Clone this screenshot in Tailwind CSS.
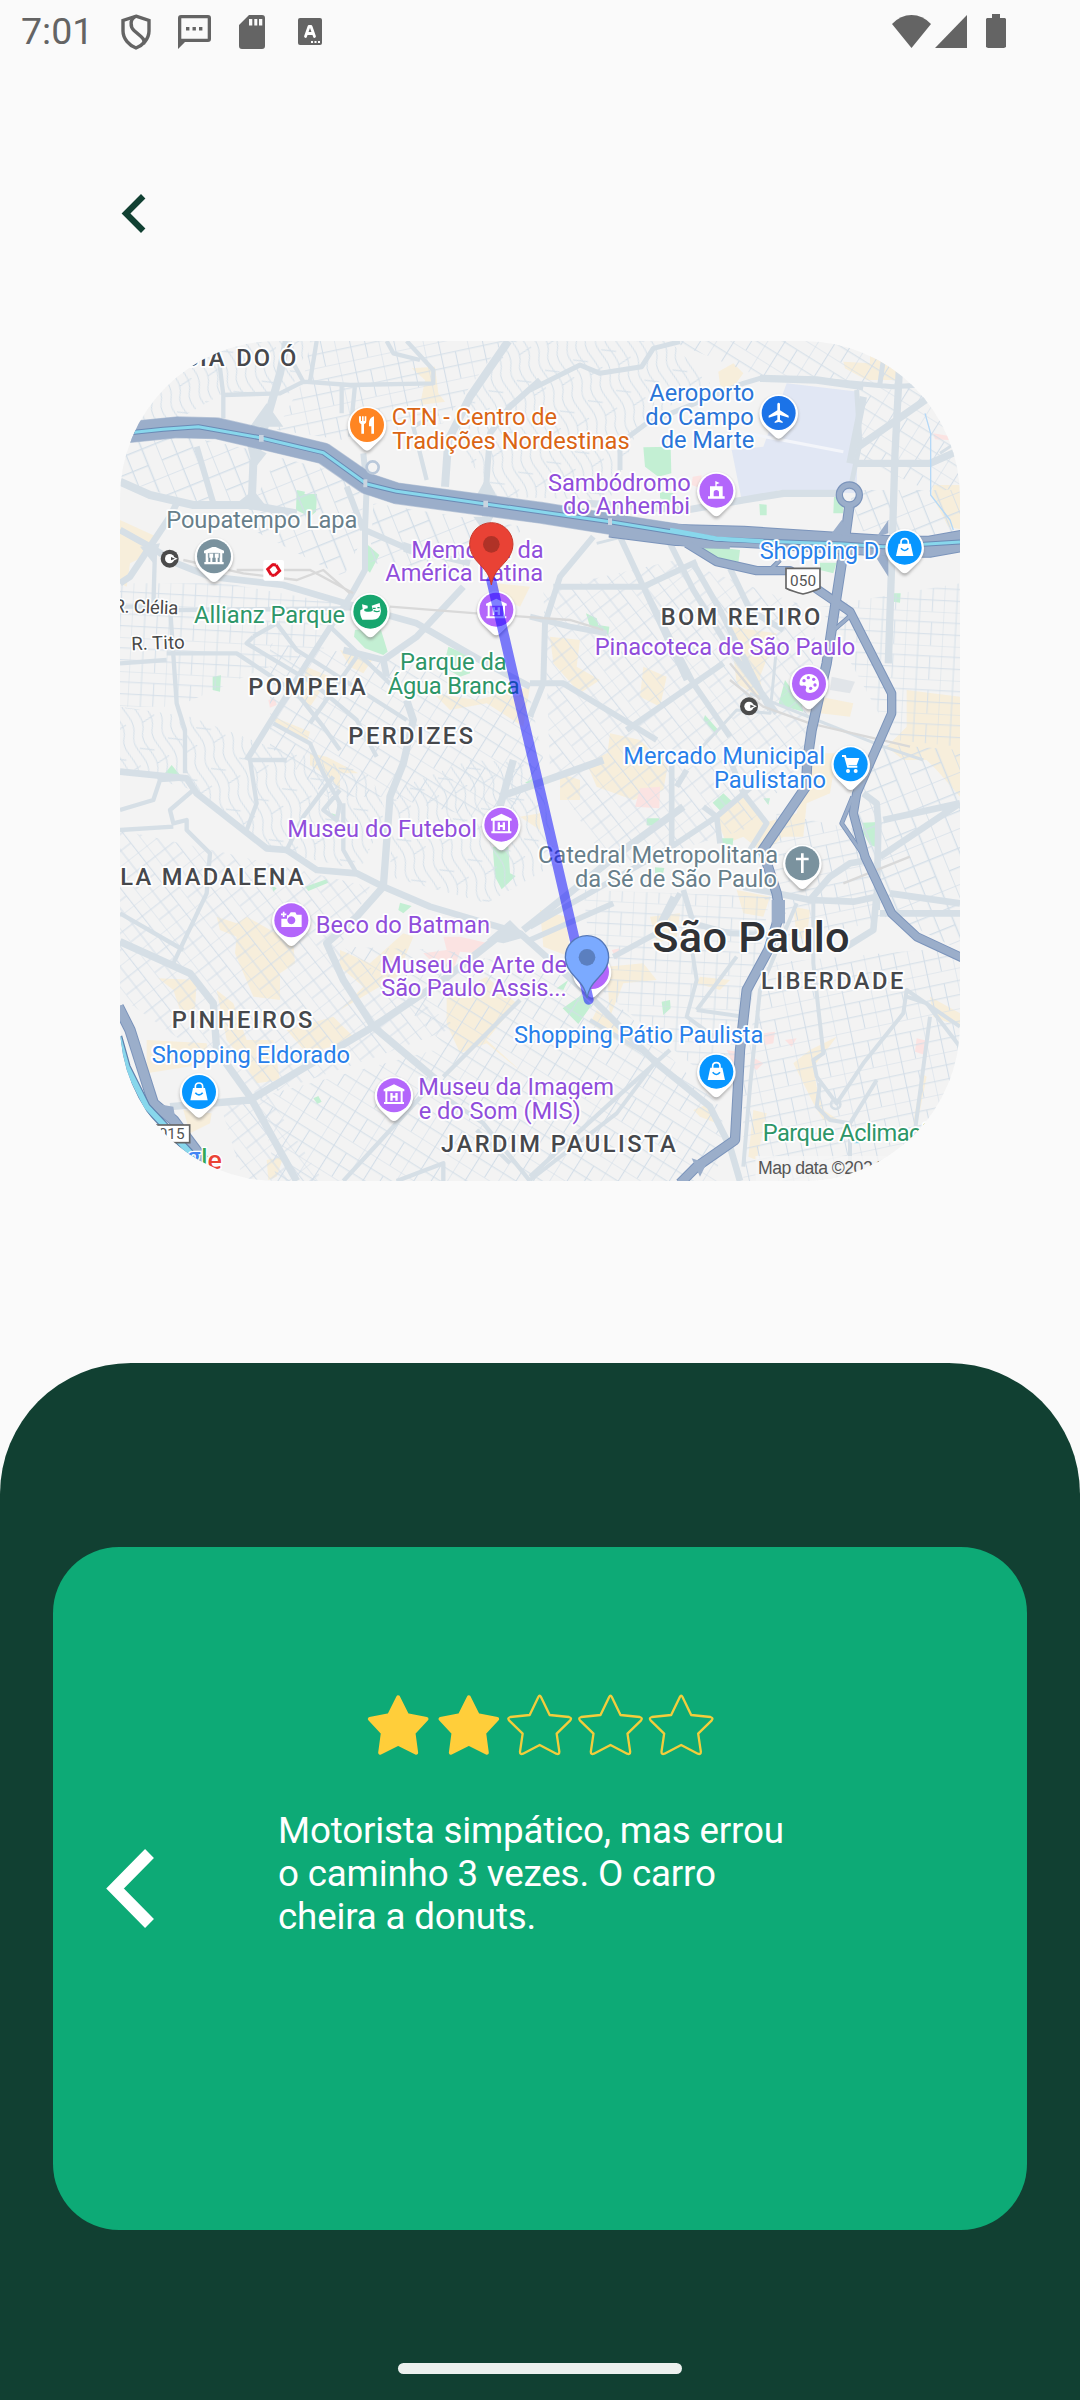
<!DOCTYPE html>
<html lang="pt-BR">
<head>
<meta charset="utf-8">
<title>Avaliação da corrida</title>
<script src="https://cdn.jsdelivr.net/npm/@tailwindcss/browser@4"></script>
</head>
<body class="bg-[#fafafa]">
<div class="flex h-[2400px] w-[1080px] flex-col overflow-hidden bg-[#fafafa] font-['Roboto',sans-serif]">

  <!-- status bar -->
  <header class="flex h-16 shrink-0 items-center pl-[21px] pr-[74px] text-[#646464]">
    <span class="w-[97px] text-[37.5px] leading-none">7:01</span>
    <svg class="ml-[3px] h-9 w-[30px] shrink-0" viewBox="0 0 30 36" fill="none" stroke="currentColor" stroke-width="3.4">
      <path d="M15 2.2 28 6.5V17C28 25 21.500 31.500 15 34 8.500 31.500 2 25 2 17V6.500Z"/>
      <path d="M14 3C9 5 9 13 13 16.500L20 22.500C23.500 25.500 23.500 28 22.500 30"/>
    </svg>
    <svg class="ml-[27px] h-[34px] w-[33px] shrink-0" viewBox="0 0 33 34" fill="currentColor">
      <path fill-rule="evenodd" d="M3 0H30Q33 0 33 3V24Q33 27 30 27H7L0 34V3Q0 0 3 0ZM3.300 3.300V23.700H29.700V3.300Z"/>
      <path d="M8 12h3.400v3.400H8zM14.500 12h3.400v3.400h-3.400zM21 12h3.400v3.400H21z"/>
    </svg>
    <svg class="ml-[28px] h-[34px] w-[26px] shrink-0" viewBox="0 0 26 34" fill="currentColor">
      <path fill-rule="evenodd" d="M10 0H23Q26 0 26 3V31Q26 34 23 34H3Q0 34 0 31V10ZM10 4V10.500H13.300V4ZM15.300 4V10.500H18.300V4ZM20 4V10.500H23.300V4Z"/>
    </svg>
    <svg class="ml-[33px] mt-[-2px] h-[27px] w-[24px] shrink-0" viewBox="0 0 24 27">
      <rect width="24" height="27" rx="2" fill="#646464"/>
      <path d="M7.500 18.500 11 8.500H13L16.500 18.500M8.800 15.500H15.200" fill="none" stroke="#fff" stroke-width="2.800" stroke-linecap="round" stroke-linejoin="round"/>
      <path d="M13 23h2v2h-2zM16.500 23h2v2h-2zM20 23h2v2h-2z" fill="#fff"/>
    </svg>
    <div class="mt-[-2px] ml-auto flex items-center">
      <svg class="h-[33px] w-[39px]" viewBox="0 0 39 33" fill="currentColor"><path d="M0 9Q8.500 0 19.500 0T39 9L19.500 33Z"/></svg>
      <svg class="ml-[4px] h-[33px] w-[32px]" viewBox="0 0 32 33" fill="currentColor"><path d="M32 0V33H0Z"/></svg>
      <svg class="ml-[19px] h-[34px] w-[20px]" viewBox="0 0 20 34" fill="currentColor"><path d="M6 0H14V4H19L20 5V33L18 34H2L0 33V5L1 4H6Z"/></svg>
    </div>
  </header>

  <!-- back button -->
  <nav class="flex h-[277px] shrink-0 pl-[121px] pt-[130px]">
    <svg class="h-[39px] w-[25px]" viewBox="0 0 25 39"><path d="M22.200 2.200 5 19.500 22.200 36.800" fill="none" stroke="#114032" stroke-width="6.200"/></svg>
  </nav>

  <!-- map -->
  <main class="h-[840px] w-[840px] shrink-0 self-center overflow-hidden rounded-[157px]">
  <svg class="h-[840px] w-[840px]" viewBox="30 33 2520 2520" font-family="Roboto, sans-serif" font-size="71">
    <defs>
      <g id="street" fill="none" stroke="#d3dee8" stroke-width="3.200"><path d="M0 0H130M0 38H130M0 80H130M0 0V120M46 0V120M90 38V120"/></g>
      <pattern id="g1" width="130" height="120" patternUnits="userSpaceOnUse" patternTransform="rotate(32)"><use href="#street"/></pattern>
      <pattern id="g2" width="130" height="120" patternUnits="userSpaceOnUse" patternTransform="rotate(-12)"><use href="#street"/></pattern>
      <pattern id="g3" width="130" height="120" patternUnits="userSpaceOnUse" patternTransform="rotate(52) scale(.9)"><use href="#street"/></pattern>
      <pattern id="g4" width="130" height="120" patternUnits="userSpaceOnUse" patternTransform="rotate(3) scale(.85)"><use href="#street"/></pattern>
      <pattern id="g5" width="130" height="120" patternUnits="userSpaceOnUse" patternTransform="rotate(68) scale(1.200)"><use href="#street"/></pattern>
      <pattern id="wavy" width="90" height="130" patternUnits="userSpaceOnUse" patternTransform="rotate(-20)"><path d="M10 0C-10 40 40 80 10 130M38 0C20 40 70 80 38 130M68 0C50 40 100 80 68 130M15 40L55 60M50 100L90 90" fill="none" stroke="#d5e0e9" stroke-width="3"/></pattern>
      <filter id="soft" x="-30%" y="-30%" width="160%" height="160%"><feGaussianBlur stdDeviation="4"/></filter>
      <g id="pin">
        <path d="M-42 44A58 58 0 1 1 42 44L11 76Q0 86-11 76Z" fill="#777" opacity=".55" filter="url(#soft)" transform="translate(0 3)"/>
        <path d="M-42 42A58 58 0 1 1 42 42L10 73Q0 81-10 73Z" fill="#fff"/>
        <circle r="51"/>
      </g>
      <g id="museum" fill="#fff"><path d="M-31-12V-18L0-33 31-18V-12ZM-26-13H-20V21H-26ZM20-13H26V21H20ZM-30 20H30V26H-30Z"/><path d="M-11 16V-7H-4V1H4V-7H11V16H4V7H-4V16Z"/></g>
      <g id="bag"><path d="M-18-12H18L26 25H-26Z" fill="#fff"/><path d="M-11-10V-16Q-11-27 0-27T11-16V-10" fill="none" stroke="#fff" stroke-width="5"/><path d="M-11 2Q0 15 11 2" fill="none" stroke="#0796ff" stroke-width="5"/></g>
      <path id="marker" d="M0 122C-5 98-10 86-34 61Q-65 31-65 0A65 65 0 1 1 65 0Q65 31 34 61C10 86 5 98 0 122Z"/>
      <g id="metro"><circle r="27" fill="#4b4b4b"/><circle r="14" fill="#fff"/><path d="M2-10 24 0 2 10Z" fill="#fff"/><path d="M4-5 16 0 4 5Z" fill="#4b4b4b"/></g>
    </defs>
    <rect x="30" y="33" width="2520" height="2520" fill="#f3f3f3"/>

    <!-- blocks: commercial, parks, hospitals -->
    <g fill="#f7eedb">
      <path d="M905 115 975 110 985 190 1005 215 930 225 945 150ZM30 570 140 620 130 665 60 700 50 770 30 760ZM690 960 790 985 760 1030 720 1010ZM590 1010 660 1040 600 1130 570 1110ZM490 1160 600 1205 590 1240 500 1190ZM970 1090 1100 1110 1260 1070 1240 1190 1130 1120 1020 1140ZM1160 760 1260 770 1230 830 1160 800Z"/>
      <g transform="translate(1260 0)"><path d="M565 125 610 100 640 130 600 185 570 165ZM940 95 1020 100 1020 70 1100 100 1110 150 1010 150 945 115ZM1210 465H1300V600L1255 590 1205 495ZM60 920 150 930 140 1010 210 1050 150 1090 70 1000ZM340 1010 410 1040 390 1130 330 1100ZM600 890 740 910 690 1040 700 1110 620 1060ZM870 1100 970 1120 960 1160 870 1150ZM1130 1080 1290 1100V1290H1120L1070 1250 1130 1190ZM240 1210 330 1230 390 1290H230Z"/></g>
      <g transform="translate(0 1260)"><path d="M600 10 650 20 745 70 690 70 690 120 650 75 600 45ZM320 500 380 520 410 500 550 580 555 640 510 670 510 750 430 740 375 610 380 560 330 540ZM145 685 260 690 255 780 210 780 190 720ZM320 720 370 760 410 870 490 870 510 990 440 1000 390 920 350 870ZM110 870 290 880 300 940 110 970ZM690 600 780 640 880 550 910 560 860 680 690 780 760 710 690 650ZM530 840 670 800 740 870 590 910ZM1010 740 1130 680 1220 760 1130 870 1240 970 1130 880 1050 910 1010 820ZM220 1080 305 1090 300 1120 240 1150ZM470 1230 520 1220 500 1280 475 1290ZM1230 200 1290 190V240Z"/></g>
      <g transform="translate(1260 1260)"><path d="M90 70 150 90 150 150 90 150ZM250 0 420 10 400 120 310 150 200 110 170 40ZM840 10H920L900 130 830 160 820 260 760 260 700 310 640 260 590 280 560 210 640 130 700 220 800 190ZM1160 0H1290V140L1220 60ZM30 480 110 500 120 620 40 590ZM230 650 340 640 380 690 280 700 240 800ZM360 500 450 490 440 560 380 580ZM510 680 600 690 570 720 500 700ZM620 420 720 440 700 500 640 490ZM790 470 840 480 830 570 800 560ZM840 900 920 860 890 900 850 950 860 1010 880 1080 940 1120 880 1110 850 1060 790 940ZM670 1080 710 1090 680 1230 655 1220ZM1200 740 1290 790V830L1210 800ZM1175 970 1190 980 1160 1130 1150 1120ZM200 780 330 870 310 900 180 820ZM490 1080 540 1060 560 1120 510 1100Z"/></g>
    </g>
    <g fill="#c3efd3">
      <path d="M560 480 585 485 583 492 621 492 618 545 600 560 558 540ZM768 640 808 675 780 728 766 715ZM735 900 810 890 833 965 820 975 765 955 732 920ZM1015 950 1085 980 1080 1030 1050 1040 1000 1010ZM308 1040 333 1036 330 1085 308 1080Z"/>
      <g transform="translate(1260 0)"><path d="M340 352 422 350 424 430 385 440 345 410ZM390 485 430 490 428 520 390 505ZM688 522 710 524 710 556 690 556ZM912 500 940 500 940 550 910 550ZM505 645 630 660 625 700 550 690ZM870 698 920 698 910 730 870 720ZM1090 790 1112 790 1110 818 1090 815ZM168 850 200 865 205 885 238 890 235 915 180 890ZM765 1050 815 1120 820 1145 745 1125ZM525 1155 565 1200 560 1215 520 1170Z"/></g>
      <g transform="translate(0 1260)"><path d="M158 78 185 45 210 75ZM1148 290 1195 290 1200 370 1217 378 1175 418 1155 380ZM585 410 650 388 655 398 595 423ZM870 458 905 468 880 490 865 480ZM665 190 680 195 665 210ZM610 1045 625 1038 635 1055 622 1062ZM1245 98 1270 85V105ZM485 405 500 415 490 425Z"/></g>
      <g transform="translate(1260 1260)"><path d="M548 158 580 130 607 155 575 187ZM350 205 388 205 388 228 350 226ZM575 265 610 265 608 285 575 280ZM700 145 720 145 715 165ZM998 218 1043 216 1035 290 1020 285 1000 250ZM98 775 155 735 185 765 145 822ZM395 755 420 750 422 775 400 795ZM375 352 403 354 398 375 375 370ZM80 715 115 690 100 720Z"/></g>
    </g>
    <g fill="#fbe3e2">
      <path d="M475 1110 495 1105 500 1125 480 1133ZM1748 440 1775 436 1770 475 1745 465ZM2470 310 2530 320 2550 332 2475 328ZM940 1870 1010 1860 1000 1820 1050 1820 1135 1840 1110 1870 1050 1865 1030 1920 960 1890ZM1590 1375 1650 1370 1648 1435 1575 1430ZM1505 1860 1530 1855 1520 1890ZM1960 2110 1995 2105 1990 2140 1965 2145ZM2025 2130 2060 2125 2045 2150ZM2420 2125 2450 2132 2445 2175 2415 2165ZM1925 2180 1960 2200 1940 2220 1925 2210ZM1850 2160 1880 2165 1870 2200Z"/>
    </g>
    <path d="M2030 160 2245 185 2240 490 2010 480 1895 510 1865 360 1960 350Z" fill="#e1e7f4"/>
    <path d="M1860 300 2200 365" stroke="#f3f5fa" stroke-width="9"/>
    <path d="M2165 1040 2235 1055 2220 1090 2160 1080Z" fill="#e1e5e9"/>

    <!-- local street grids -->
    <g>
      <path fill="url(#wavy)" d="M30 33H600L540 190 340 190 200 270 30 280Z"/>
      <path fill="url(#g2)" d="M600 33H1180L1000 280 700 330 500 300 580 150Z"/>
      <path fill="url(#wavy)" d="M1180 33H1680L1800 160 1590 280 1500 510 1150 500 1020 300Z"/>
      <path fill="url(#g1)" d="M1680 33H2550V470L2470 490 2240 380 2240 170 1950 140Z"/>
      <path fill="url(#g5)" d="M30 340 240 320 430 360 420 520 250 520 30 450ZM2230 480H2550V620L2200 600Z"/>
      <path fill="url(#g4)" d="M30 760 350 760 680 820 640 960 450 1020 200 1130 30 1130Z"/>
      <path fill="url(#g1)" d="M480 940 820 980 1260 1100 1300 1290 1180 1480 830 1400 650 1400 480 1250Z"/>
      <path fill="url(#g3)" d="M1300 780 1700 690 2120 840 2090 1290 1900 1500 1500 1620 1320 1320Z"/>
      <path fill="url(#wavy)" d="M30 1130 240 1160 480 1250 780 1330 830 1450 750 1620 480 1560 250 1380 30 1320Z"/>
      <path fill="url(#wavy)" d="M1080 1290 1280 1300 1340 1600 1130 1720 840 1640 850 1380Z"/>
      <path fill="url(#g3)" d="M30 1500 350 1570 780 1670 690 1850 1040 2090 800 2180 450 2300 30 2000Z"/>
      <path fill="url(#g1)" d="M700 1850 1000 1860 1450 1950 1840 2340 1820 2553H500L450 2300 1010 2150Z"/>
      <path fill="url(#g4)" d="M1420 1680 1980 1700 1900 2150 1850 2290 1450 1960Z"/>
      <path fill="url(#g2)" d="M1970 1900 2550 1850V2553H1900L1900 2200Z"/>
      <path fill="url(#g5)" d="M2280 1240 2550 1260V1860L2350 1760 2240 1500Z"/>
      <path fill="url(#g4)" d="M2130 830 2550 760V1250L2350 1230Z"/>
      <path fill="url(#g3)" d="M330 2320 470 2290 640 2553H400Z"/>
      <path fill="url(#g2)" d="M2000 1450 2250 1500 2330 1760 2050 1850 1960 1700Z"/>
      <path fill="url(#g5)" d="M500 380 740 440 770 600 700 740 350 560 440 500ZM790 520 1240 590 1150 720 780 700Z"/>
    </g>

    <!-- arterial roads -->
    <g fill="none" stroke="#d6dfe6" stroke-width="13" stroke-linejoin="round">
      <path d="M320 33 340 195 510 190 580 155 720 165 970 160 970 120 890 33M340 195V265M620 33 600 155M580 155 550 100M695 165V250M735 165 720 320M830 33 850 70 930 90M985 250 910 290 950 450"/>
      <path stroke-width="24" d="M530 33 510 130 470 270 430 400 425 520M1195 33 1080 200 1015 330 1005 470M30 455 120 495 250 525 420 525 560 550"/>
      <path stroke-width="18" d="M1290 150 1200 230 1140 310 1130 450 1125 560M760 370 770 470 765 600 890 655 1080 700M765 600V720L720 800 590 1000 410 1290M710 470 760 600M260 350 310 520"/>
      <path stroke-width="20" d="M30 600 120 650 200 700 300 740 520 765 740 830 920 880 1110 990 1260 1070M120 650 60 740 30 760M120 650 180 560 200 520M1060 770 920 920 820 990 830 1040M820 990 700 960"/>
      <path d="M135 660 130 830 200 840 740 835M170 970 380 970 560 1090 640 1190 690 1260M180 830 200 1120 225 1200 225 1330M430 920 500 880 560 960 890 1170M430 920 410 940 610 1060 740 1170 800 1280M490 1180 600 1240 640 1330 690 1420 680 1470 640 1440 690 1380M740 980 600 1180M660 890 860 1080M30 830H170M30 1000 170 990M480 1180 560 1060"/>
      <path stroke-width="20" d="M30 1325 230 1345 260 1390 470 1555 530 1560 620 1620 740 1630 820 1670 960 1730 1130 1780 1230 1810 1420 1980 1640 2200 1800 2330 1860 2450 1890 2553"/>
      <path d="M230 1345 150 1350 130 1410 30 1440M250 1380 180 1440 190 1480 230 1470 230 1500 300 1570 290 1690 190 1900M30 1500 190 1490M30 1750 220 1860M530 1290 420 1290 440 1420 410 1500M670 1340 580 1460 530 1560M700 1420 700 1560 740 1630"/>
      <path stroke-width="22" d="M890 1110 910 1170 880 1300 840 1400 820 1670 740 1760 650 1840 700 1950 790 2090 980 2250M1480 1290 1170 1400M1210 1290 1150 1500M30 1835 240 1930 310 2020 320 2160 420 2300 560 2553M180 2330 420 2310 790 2090 1000 1950 1190 1800M1240 1800 1540 1560 1720 1430"/>
      <path d="M860 2553 1000 2500 1000 2553M1000 2240 1230 2010M700 2553 960 2270 1120 2380 1260 2553M1260 2540 1500 2320 1680 2160M1200 2500 1100 2400"/>
      <g transform="translate(1260 0)">
        <path stroke-width="15" d="M0 180 150 105 210 130 335 110 370 55 450 35M270 420 270 340 350 280 640 160 690 145 860 150 1090 170 1170 165M1060 90 1050 160M980 180 990 340 960 480"/>
        <path stroke-width="22" d="M1110 80 1095 370 1085 700 1075 1000M985 350 1200 200M970 400 1200 400 1290 360M690 145 860 150 1000 170M170 520 470 540 640 510 760 490 930 490M1000 200 960 400"/>
        <path stroke-width="18" d="M190 620 90 740 45 880 40 1060 0 1160M70 770 340 770 500 695M270 620 340 770 490 1060 600 1220M340 770 470 1050M410 620 490 780 600 960 740 1150M490 700 570 840 720 1140M0 860 120 890 230 910M0 1060 100 1060 380 1230M290 1200 580 1000M600 715 660 840 760 900"/>
        <path d="M740 950 720 1150 620 1140 480 1290M1230 370 1290 330M200 640 280 620M660 1090 860 1170 1060 1250 1180 1290" stroke-width="9"/>
      </g>
      <g transform="translate(1260 1260)">
        <path stroke-width="17" d="M425 40 425 290 0 530M440 110 470 60M425 290 560 200 700 80M520 170 560 200 570 280M460 420 490 520 600 550 720 555M450 430 380 550 250 620M430 440 390 520M250 460 0 570M600 30 640 130 710 220 660 300"/>
        <path stroke-width="20" d="M1000 130 1040 160 1045 220 1040 480M1050 320 1290 160M1060 210 1290 160M1080 430 1290 460M1050 490 1290 490M640 410 840 450 900 380 960 340 1020 330M840 450 970 455 1040 440M1040 430 1030 540 950 590"/>
        <path stroke-width="12" d="M850 450 850 640 880 910 850 930 860 980 920 1060 1000 940 1120 790 1130 720 1290 830M1200 800 1150 1180M1290 890 1190 760 1130 740M800 460 690 720 660 1010 640 1250M480 560 500 690 470 800 580 880M500 780 640 800M500 780 620 620M180 810 380 930 260 1090 0 1290M870 1000 860 1070 900 1110 960 1120 1040 990M960 1120 960 1290"/>
        <circle cx="917" cy="1063" r="14" stroke-width="8"/>
      </g>
    </g>
    <g fill="#d6dfe6"><path d="M470 220 520 290 420 290ZM380 520 430 480 470 530 420 540ZM410 340 470 370 430 420ZM1130 440 1165 510 1095 505ZM1130 1830 1200 1770 1250 1820 1180 1840ZM1090 560H1150L1125 610ZM90 650 150 640 130 700Z"/><path d="M880 635 925 650V680L880 665Z"/></g>

    <!-- railways -->
    <g fill="none" stroke="#d9d9d9" stroke-width="7">
      <path d="M220 690 400 730 560 750 640 720 720 790M840 830 1100 850 1380 870 1480 900M380 720 600 720 730 790M1860 1050 1960 1130 2100 1180 2400 1250M1860 1000 1950 1110M2200 1660 2400 1580"/>
    </g>

    <!-- expressways -->
    <g fill="none" stroke="#7b94bb" stroke-linejoin="round">
      <path stroke-width="66" stroke-opacity=".45" d="M20 310 200 292 320 295 450 325 640 370 770 460 860 490 1290 548 1520 585 1760 622 1860 625"/>
      <path stroke-width="66" d="M1500 590 1700 615 1900 620 2200 640 2370 650 2460 650 2560 632"/>
      <path stroke-width="28" d="M1730 640 1820 695 1940 722 2040 722 2110 770 2220 845 2345 1090 2345 1150 2240 1390 2230 1450 2265 1580 2345 1750 2420 1820 2560 1885"/>
      <path stroke-width="31" d="M2218 530 2195 700 2175 830 2150 1000 2105 1200 2092 1290 2088 1370 1958 1560 2000 1690 2010 1750 1975 1860 1910 1980 1890 2160 1875 2430 1760 2510 1710 2560"/>
      <path stroke-width="14" d="M2228 1400 2195 1480 2270 1590M2160 910 2230 850M1980 720 2010 690"/>
      <circle cx="2218" cy="495" r="30" stroke-width="22"/>
      <path stroke-width="34" d="M25 2030 60 2100 130 2320 190 2370 280 2490"/>
    </g>
    <g fill="none" stroke="#9baeca" stroke-linejoin="round">
      <path stroke-width="62" d="M20 310 200 292 320 295 450 325 640 370 770 460 860 490 1290 548 1520 585 1760 622 1860 625"/>
      <path stroke-width="60" d="M1500 590 1700 615 1900 620 2200 640 2370 650 2460 650 2560 632"/>
      <path stroke-width="22" d="M1730 640 1820 695 1940 722 2040 722 2110 770 2220 845 2345 1090 2345 1150 2240 1390 2230 1450 2265 1580 2345 1750 2420 1820 2560 1885"/>
      <path stroke-width="25" d="M2218 530 2195 700 2175 830 2150 1000 2105 1200 2092 1290 2088 1370 1958 1560 2000 1690 2010 1750 1975 1860 1910 1980 1890 2160 1875 2430 1760 2510 1710 2560"/>
      <path stroke-width="9" d="M2228 1400 2195 1480 2270 1590M2160 910 2230 850M1980 720 2010 690"/>
      <circle cx="2218" cy="495" r="30" stroke-width="15"/>
      <path stroke-width="28" d="M25 2030 60 2100 130 2320 190 2370 280 2490"/>
      <path stroke-width="40" d="M2005 1710V1780"/>
    </g>
    <path d="M2165 610 2195 570 2225 620ZM2335 570V610L2300 620ZM2290 670 2335 740V680ZM130 2320 190 2330 200 2390ZM1745 2485 1790 2500 1770 2540Z" fill="#9baeca"/>

    <!-- rivers -->
    <g fill="none" stroke-linejoin="round">
      <path d="M20 312 160 298 265 290 450 323 640 368 770 462 860 484 1290 545 1500 575 1820 628 1960 634 2200 642 2320 650 2550 636" stroke="#6b8ab5" stroke-width="15"/>
      <path d="M20 312 160 298 265 290 450 323 640 368 770 462 860 484 1290 545 1500 575 1820 628 1960 634 2200 642 2320 650 2550 636" stroke="#88d7ec" stroke-width="9"/>
      <path d="M1680 600 1820 626 1960 634" stroke="#88d7ec" stroke-width="13"/>
      <path d="M25 2120 50 2210 110 2330 190 2415 260 2490" stroke="#5f80ad" stroke-width="24"/>
      <path d="M25 2120 50 2210 110 2330 190 2415 260 2490" stroke="#88d7ec" stroke-width="17"/>
      <path d="M2445 250 2462 310V495L2520 570 2530 600" stroke="#b4d8f7" stroke-width="4"/>
      <path d="M2240 2400V2440" stroke="#90d6ee" stroke-width="14"/>
    </g>
    <path d="M447 315h14v20h-14zM760 448h12v24h-12zM1120 512h14v20h-14zM1494 565h12v20h-12z" fill="#c9d4e0"/>
    <circle cx="788" cy="412" r="18" fill="none" stroke="#b9c8da" stroke-width="8"/>

    <!-- labels -->
    <g stroke="#fff" stroke-width="11" stroke-linejoin="round" paint-order="stroke">
      <g fill="#46484c" font-weight="500">
        <text x="222" y="108" textLength="121">SIA</text>
        <text x="379" y="108" textLength="180">DO Ó</text>
        <text x="415" y="1096" textLength="352">POMPEIA</text>
        <text x="715" y="1242" textLength="374">PERDIZES</text>
        <text x="1652" y="884" textLength="479">BOM RETIRO</text>
        <text x="31" y="1665" textLength="550">LA MADALENA</text>
        <text x="185" y="2094" textLength="422">PINHEIROS</text>
        <text x="1953" y="1977" textLength="427">LIBERDADE</text>
        <text x="993" y="2466" textLength="704">JARDIM PAULISTA</text>
        <text x="1627" y="1867" font-size="130" textLength="592" fill="#303236">São Paulo</text>
      </g>
      <g fill="#da6515">
        <text x="845" y="285" textLength="496">CTN - Centro de</text>
        <text x="847" y="356" textLength="712">Tradições Nordestinas</text>
      </g>
      <g fill="#687f8b">
        <text x="169" y="593" textLength="573">Poupatempo Lapa</text>
        <text x="1284" y="1600" textLength="720">Catedral Metropolitana</text>
        <text x="1395" y="1670" textLength="606">da Sé de São Paulo</text>
      </g>
      <g fill="#2d9668">
        <text x="252" y="880" textLength="453">Allianz Parque</text>
        <text x="870" y="1020" textLength="320">Parque da</text>
        <text x="833" y="1091" textLength="396">Água Branca</text>
        <text x="1958" y="2432" textLength="552">Parque Aclimação</text>
      </g>
      <g fill="#2a75d8">
        <text x="1618" y="213" textLength="315">Aeroporto</text>
        <text x="1606" y="284" textLength="325">do Campo</text>
        <text x="1652" y="355" textLength="281">de Marte</text>
      </g>
      <g fill="#2880ea">
        <text x="1949" y="687" textLength="359">Shopping D</text>
        <text x="1540" y="1303" textLength="605">Mercado Municipal</text>
        <text x="1812" y="1374" textLength="336">Paulistano</text>
        <text x="125" y="2200" textLength="595">Shopping Eldorado</text>
        <text x="1212" y="2140" textLength="748">Shopping Pátio Paulista</text>
      </g>
      <g fill="#904edb">
        <text x="1314" y="482" textLength="428">Sambódromo</text>
        <text x="1359" y="552" textLength="381">do Anhembi</text>
        <text x="904" y="683" textLength="397">Memorial da</text>
        <text x="826" y="754" textLength="473">América Latina</text>
        <text x="1454" y="976" textLength="782">Pinacoteca de São Paulo</text>
        <text x="532" y="1521" textLength="569">Museu do Futebol</text>
        <text x="617" y="1808" textLength="523">Beco do Batman</text>
        <text x="813" y="1928" textLength="558">Museu de Arte de</text>
        <text x="814" y="1999" textLength="556">São Paulo Assis...</text>
        <text x="925" y="2296" textLength="587">Museu da Imagem</text>
        <text x="926" y="2366" textLength="486">e do Som (MIS)</text>
      </g>
      <g fill="#484848" font-size="56" stroke-width="9">
        <text x="10" y="850" textLength="195" transform="rotate(2 110 840)">R. Clélia</text>
        <text x="64" y="958" textLength="160" transform="rotate(-2 140 945)">R. Tito</text>
      </g>
    </g>

    <!-- road shields -->
    <g>
      <path d="M2028 715H2130V775Q2110 785 2079 792 2048 785 2028 775Z" fill="#fff" stroke="#666" stroke-width="5"/>
      <text x="2040" y="769" font-size="46" textLength="78" fill="#555">050</text>
      <rect x="110" y="2385" width="129" height="53" fill="#fff" stroke="#666" stroke-width="5"/>
      <text x="146" y="2428" font-size="46" textLength="78" fill="#555">015</text>
    </g>

    <!-- points of interest -->
    <use href="#metro" x="179" y="686"/><use href="#metro" x="1917" y="1129"/>
    <rect x="460" y="690" width="62" height="62" rx="6" fill="#fff"/>
    <path d="M486 704 473 720 486 736M496 704 509 720 496 736M484 704H496M486 736H496" transform="rotate(8 491 720)" fill="none" stroke="#e01020" stroke-width="9"/>

    <g transform="translate(771 285)"><use href="#pin" fill="#ff8522"/><path d="M-24-26V-12Q-24-4-17-2V26H-9V-2Q-2-4-2-12V-26H-7V-12H-10V-26H-15V-12H-18V-26ZM21-26Q6-22 6-4V4H13V26H21Z" fill="#fff"/></g>
    <g transform="translate(2006 249)"><use href="#pin" fill="#1b73e8"/><path d="M-4-28Q0-34 4-28V-8L30 8V14L4 6V20L12 26V30L0 27-12 30V26L-4 20V6L-30 14V8L-4-8Z" fill="#fff"/></g>
    <g transform="translate(1819 482)"><use href="#pin" fill="#b366fb"/><path fill-rule="evenodd" d="M-3-29 10-23 1-19V-13H19V17H25V24H-25V17H-19V-13H-3ZM-8 17H8V6Q8-2 0-2T-8 6Z" fill="#fff"/></g>
    <g transform="translate(312 679)"><use href="#pin" fill="#7a929e"/><path d="M-30-9V-17L-5-28H5L30-17V-9ZM-25-9H-17V18H-25ZM17-9H25V18H17ZM-29 17H29V24H-29ZM-14-9H-2V4H-5V18H-11V4H-14ZM2-9H14V4H11V18H5V4H2Z" fill="#fff"/><path d="M-17-10V4M0-10V4M17-10V4M-14-9H14" stroke="#7a929e" stroke-width="2"/></g>
    <g transform="translate(781 845)"><use href="#pin" fill="#18a66f"/><path d="M-25-22-8-18V-10L-18-8V-2Q0 4 8-4L4-18 28-26 32-2Q30 24 6 24H-24Q-32 12-30-4L-23-8Z" fill="#fff"/><path d="M8-10H16M21-12H28M10-3Q20 3 28-3" fill="none" stroke="#18a66f" stroke-width="4"/></g>
    <g transform="translate(1159 839)"><use href="#pin" fill="#b366fb"/><use href="#museum"/></g>
    <g transform="translate(1174 1484)"><use href="#pin" fill="#b366fb"/><use href="#museum"/></g>
    <g transform="translate(852 2296)"><use href="#pin" fill="#b366fb"/><use href="#museum"/></g>
    <g transform="translate(2384 653)"><use href="#pin" fill="#0796ff"/><use href="#bag"/></g>
    <g transform="translate(267 2286)"><use href="#pin" fill="#0796ff"/><use href="#bag"/></g>
    <g transform="translate(1819 2225)"><use href="#pin" fill="#0796ff"/><use href="#bag"/></g>
    <g transform="translate(2097 1061)"><use href="#pin" fill="#b366fb"/><path d="M0-29C18-29 30-16 30 0S18 27 2 28C-8 28-12 22-9 14-6 7-12 4-19 6-27 8-30 2-28-6-25-20-14-29 0-29Z" fill="#fff"/><g fill="#b366fb"><circle cx="-15" cy="-9" r="5"/><circle cx="-2" cy="-18" r="5"/><circle cx="14" cy="-13" r="5"/><circle cx="18" cy="4" r="5"/><circle cx="5" cy="14" r="5"/></g></g>
    <g transform="translate(2222 1303)"><use href="#pin" fill="#0796ff"/><path d="M-26-25H-17L-8 7H20" fill="none" stroke="#fff" stroke-width="6"/><path d="M-17-19H26L18 3H-9Z" fill="#fff"/><circle cx="-8" cy="20" r="6" fill="#fff"/><circle cx="15" cy="20" r="6" fill="#fff"/></g>
    <g transform="translate(2077 1600)"><use href="#pin" fill="#7a929e"/><path d="M-4-30H4V-17H19V-9H4V29H-4V-9H-19V-17H-4Z" fill="#fff"/></g>
    <g transform="translate(544 1771)"><use href="#pin" fill="#b366fb"/><path fill-rule="evenodd" d="M-30 20V-5H-13V-15H-8L-2-24H12L16-17H31V20ZM0-12A12 12 0 1 0 .1-12Z" fill="#fff"/><path d="M-23-26V-10M-31-18H-15" stroke="#fff" stroke-width="5"/></g>
    <g transform="translate(1446 1926)"><use href="#pin" fill="#b366fb"/><path d="M0-5H14V24H-12Z" fill="#fff"/></g>

    <!-- attribution -->
    <rect x="1936" y="2478" width="600" height="75" fill="#f5f5f5" opacity=".8"/>
    <text x="1944" y="2532" font-family="Liberation Sans, Arial, sans-serif" font-size="53" textLength="372" fill="#555">Map data ©2024</text>
    <g font-family="Open Sans, sans-serif" font-weight="600" font-size="84" stroke="#fff" stroke-width="8" paint-order="stroke"><text x="231" y="2508" fill="#4285f4" font-size="74">g</text><text x="273" y="2508" fill="#34a853" font-size="72">l</text><text x="292" y="2516" fill="#ea4335" font-size="78">e</text></g>

    <!-- route -->
    <path d="M1144 752 1436 2009" stroke="#00f" stroke-opacity=".5" stroke-width="30" stroke-linecap="round"/>
    <g transform="translate(1144 643)"><use href="#marker" fill="#e94235" stroke="#c83a2e" stroke-width="3"/><circle r="25" fill="#b03227"/></g>
    <g transform="translate(1431 1882)"><use href="#marker" fill="#7baaff" stroke="#5578b8" stroke-width="4"/><circle r="25" fill="#5b7fbf"/></g>
  </svg>
  </main>

  <!-- review panel -->
  <section class="mt-[182px] flex grow flex-col items-center rounded-t-[131px] bg-[#114032] pt-[184px]">
    <article class="flex h-[683px] w-[974px] flex-col rounded-[66px] bg-[#0daa76]">
      <div class="mt-[144px] flex justify-center">
        <svg class="h-[66px] w-[354px]" viewBox="0 0 1062 198" stroke-linejoin="round">
          <defs>
            <path id="star" d="M-4 18Q0 10 4 18L30 72 88 78Q98 81 91 89L51 128 59 182Q59 192 50 188L0 162-50 188Q-59 192-59 182L-51 128-91 89Q-98 81-88 78L-30 72Z"/>
            <path id="full" d="M0 19 27 73 85 84 46 126 54 185 0 158-54 185-46 126-85 84-27 73Z"/>
          </defs>
          <g fill="#ffce3a" stroke="#ffce3a" stroke-width="12"><use href="#full" x="105.500"/><use href="#full" x="317.500"/></g>
          <g fill="none" stroke="#f3cd3c" stroke-width="7"><use href="#star" x="530"/><use href="#star" x="742.500"/><use href="#star" x="954.500"/></g>
        </svg>
      </div>
      <div class="mt-[45px] flex items-start">
        <svg class="ml-[53px] mt-[47px] h-[79px] w-[48px] shrink-0" viewBox="0 0 48 79"><path d="M43.500 4.500 9 39.500 43.500 74.500" fill="none" stroke="#fff" stroke-width="12.500"/></svg>
        <p class="ml-[124px] mt-[7px] whitespace-nowrap text-[36.75px] leading-[43px] tracking-[-0.17px] text-white">Motorista simpático, mas errou<br>o caminho 3 vezes. O carro<br>cheira a donuts.</p>
      </div>
    </article>
    <div class="mt-auto mb-[26px] h-[11px] w-[284px] rounded-full bg-[#ecf0ee]"></div>
  </section>
</div>
</body>
</html>
